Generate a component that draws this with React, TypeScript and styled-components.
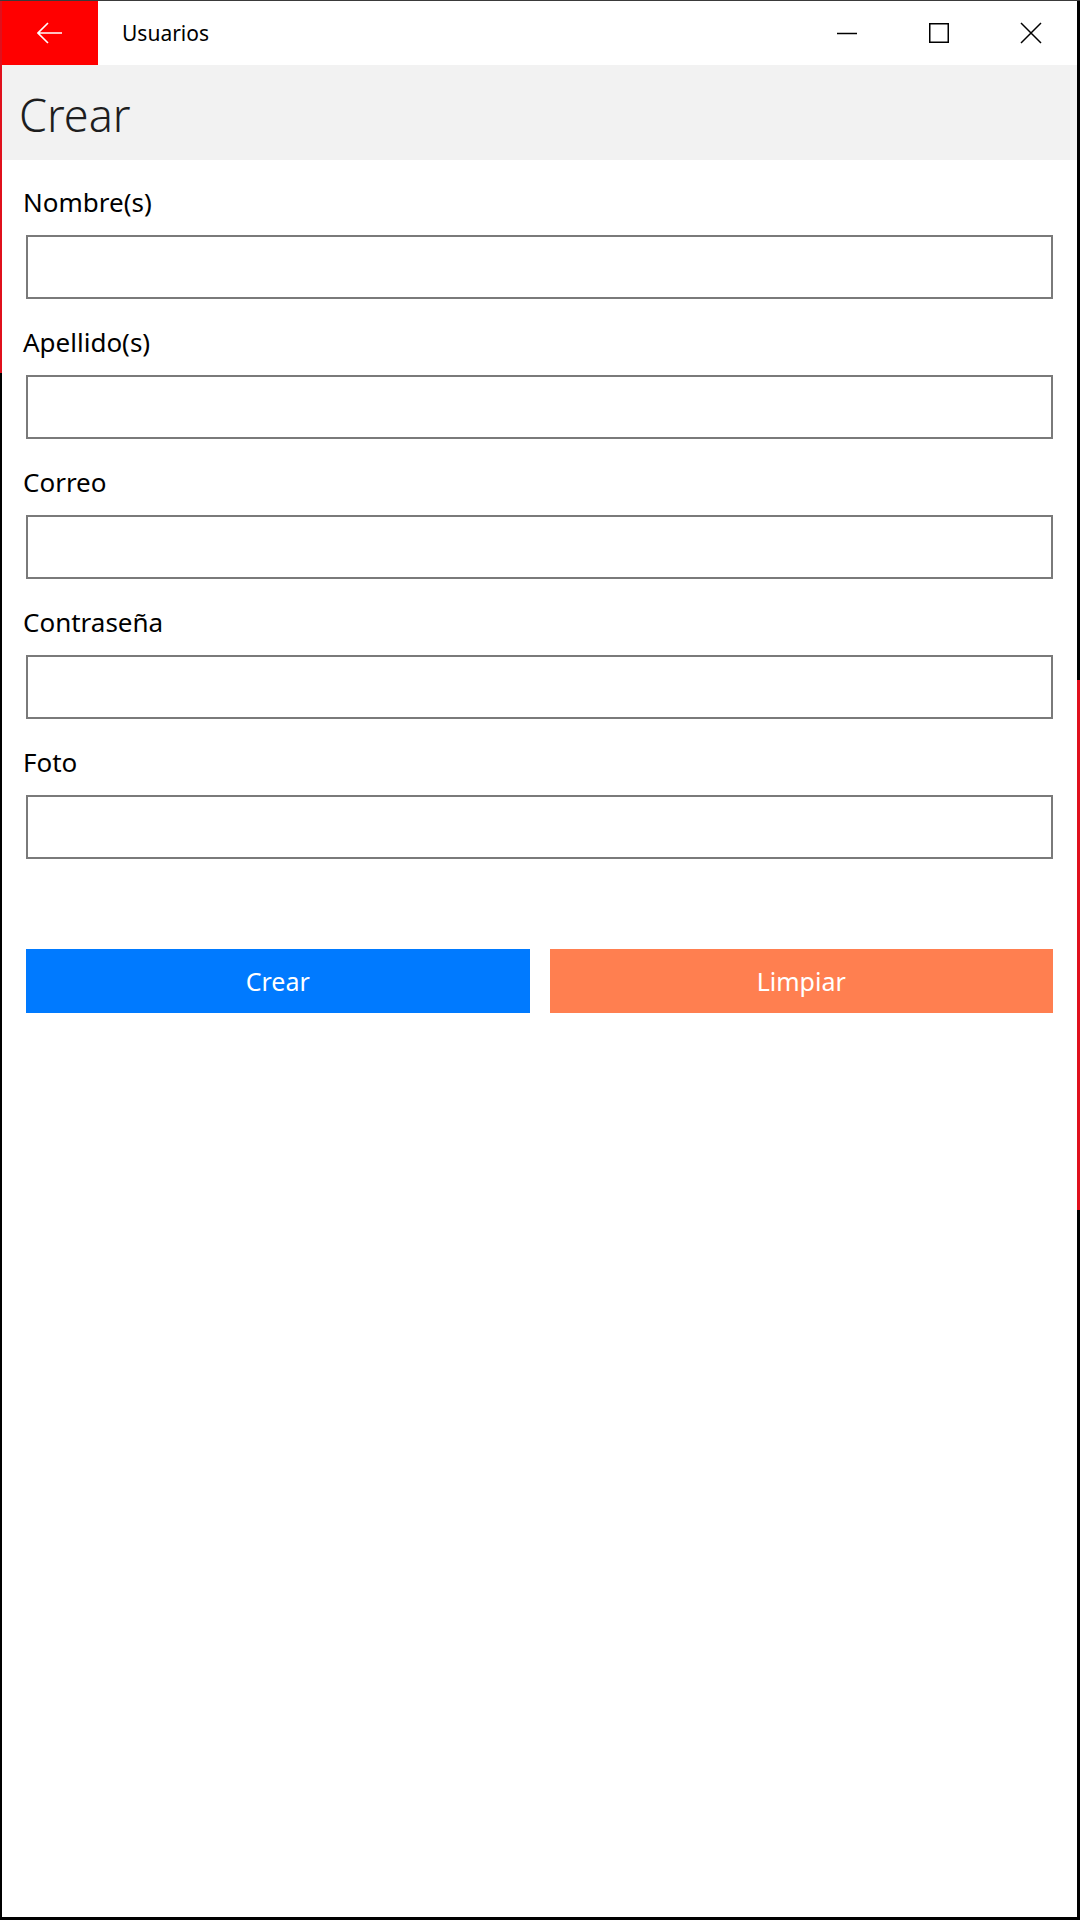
import React from "react";
import styled, { createGlobalStyle } from "styled-components";

const Global = createGlobalStyle`
  html, body { margin: 0; padding: 0; background: #fff; }
  * { box-sizing: border-box; }
  body { font-family: "Noto Sans", "Open Sans", sans-serif; }
`;

const Frame = styled.div`
  width: 1080px;
  height: 1920px;
  display: flex;
  flex-direction: column;
  border-top: 1px solid #3a3a3a;
  border-bottom: 3px solid #000;
  padding: 0 3px 0 2px;
  background:
    linear-gradient(to bottom, #e0101c 0 372px, #000 372px) left top / 2px 100% no-repeat,
    linear-gradient(to bottom, #000 0 679px, #e0101c 679px 1209px, #000 1209px) right top / 3px 100% no-repeat,
    #fff;
`;

const TitleBar = styled.div`
  height: 64px;
  display: flex;
  align-items: center;
  background: #fff;
`;

const BackButton = styled.div`
  width: 96px;
  height: 64px;
  background: #ff0000;
  display: flex;
  align-items: center;
  justify-content: center;
`;

const TitleText = styled.div`
  margin-left: 24px;
  flex: 1;
  font-size: 21px;
  color: #000;
  line-height: 64px;
`;

const CaptionButton = styled.div`
  width: 92px;
  height: 64px;
  display: flex;
  align-items: center;
  justify-content: center;
`;

const Header = styled.div`
  height: 95px;
  background: #f2f2f2;
  display: flex;
  align-items: center;
  padding-left: 17px;
  padding-top: 4px;
`;

const HeaderTitle = styled.h1`
  margin: 0;
  font-size: 45px;
  font-weight: 300;
  letter-spacing: 0;
  color: #1e1e1e;
`;

const Form = styled.div`
  display: flex;
  flex-direction: column;
  padding: 22px 24px 0 24px;
`;

const Field = styled.div`
  display: flex;
  flex-direction: column;
  gap: 13px;
  margin-bottom: 23px;
`;

const Label = styled.label`
  font-size: 26px;
  line-height: 40px;
  height: 40px;
  color: #000;
  margin-left: -3px;
`;

const Input = styled.input`
  height: 64px;
  width: 100%;
  border: 2px solid #7a7a7a;
  background: #fff;
  padding: 0 10px;
  font-family: inherit;
  font-size: 26px;
  outline: none;
`;

const Buttons = styled.div`
  display: grid;
  grid-template-columns: 1fr 1fr;
  gap: 20px;
  margin-top: 67px;
`;

const ActionButton = styled.button<{ $bg: string }>`
  height: 64px;
  border: none;
  background: ${(p) => p.$bg};
  color: #fff;
  font-family: inherit;
  font-size: 25px;
  cursor: pointer;
`;

const fields = ["Nombre(s)", "Apellido(s)", "Correo", "Contraseña", "Foto"];

export default function App() {
  return (
    <>
      <Global />
      <Frame>
        <TitleBar>
          <BackButton>
            <svg width="26" height="22" viewBox="0 0 26 22" fill="none">
              <path d="M1 11 H25 M11 1 L1 11 L11 21" stroke="#fff" strokeWidth="1.6" />
            </svg>
          </BackButton>
          <TitleText>Usuarios</TitleText>
          <CaptionButton>
            <svg width="22" height="22" viewBox="0 0 22 22" fill="none">
              <path d="M1 11.5 H21" stroke="#000" strokeWidth="1.5" />
            </svg>
          </CaptionButton>
          <CaptionButton>
            <svg width="22" height="22" viewBox="0 0 22 22" fill="none">
              <rect x="1.75" y="1.75" width="18.5" height="18.5" stroke="#000" strokeWidth="1.5" />
            </svg>
          </CaptionButton>
          <CaptionButton>
            <svg width="22" height="22" viewBox="0 0 22 22" fill="none">
              <path d="M1 1 L21 21 M21 1 L1 21" stroke="#000" strokeWidth="1.5" />
            </svg>
          </CaptionButton>
        </TitleBar>
        <Header>
          <HeaderTitle>Crear</HeaderTitle>
        </Header>
        <Form>
          {fields.map((f) => (
            <Field key={f}>
              <Label>{f}</Label>
              <Input type={f === "Contraseña" ? "password" : "text"} />
            </Field>
          ))}
          <Buttons>
            <ActionButton $bg="#007aff">Crear</ActionButton>
            <ActionButton $bg="#ff7f50">Limpiar</ActionButton>
          </Buttons>
        </Form>
      </Frame>
    </>
  );
}
